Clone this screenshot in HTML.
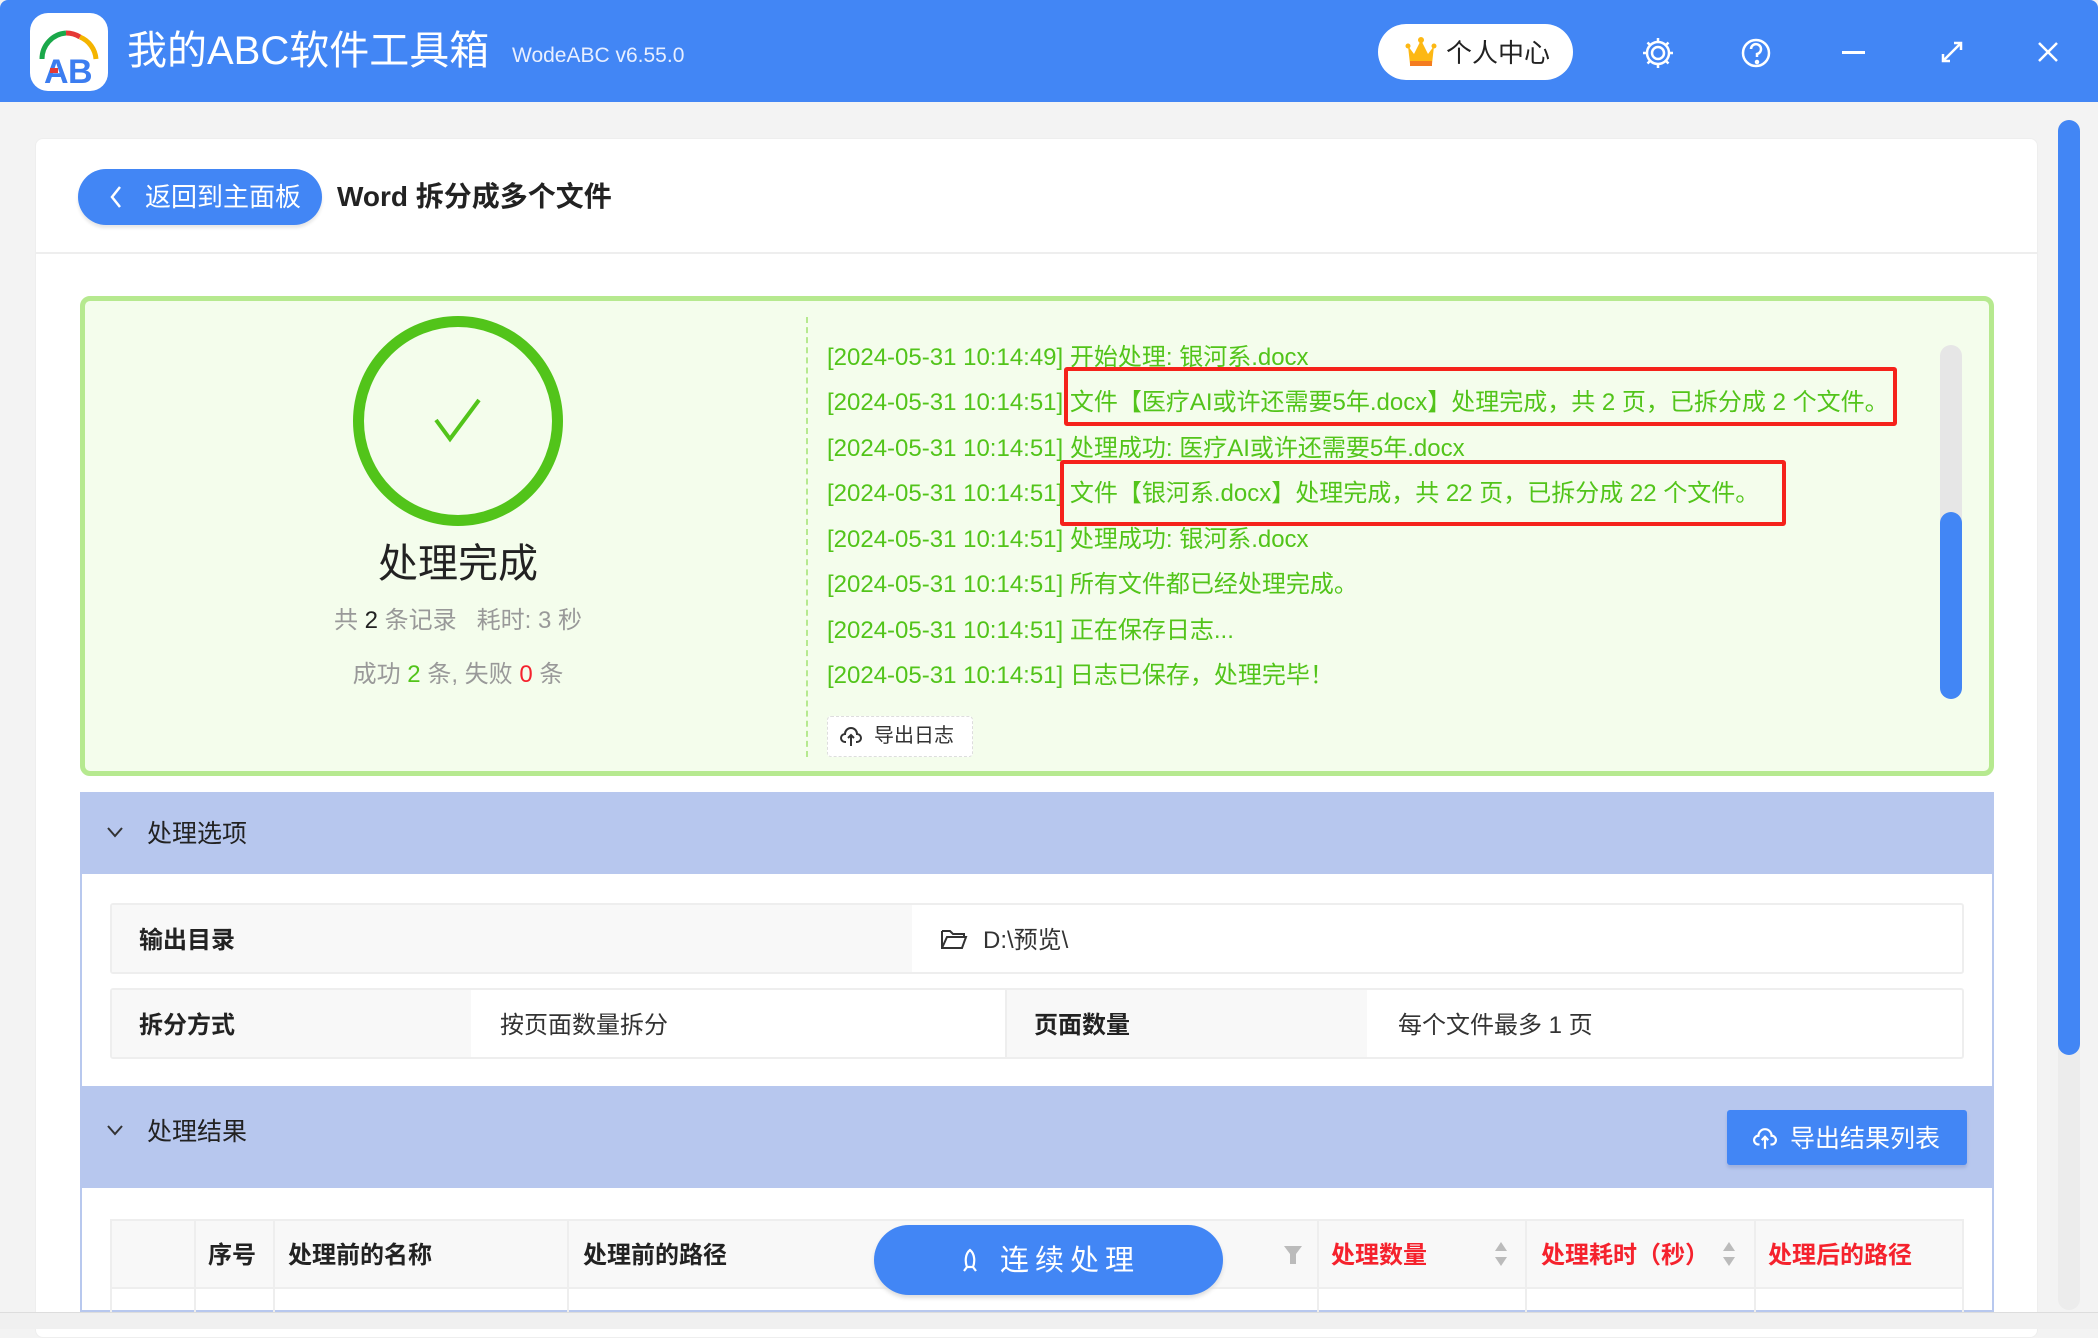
<!DOCTYPE html>
<html><head><meta charset="utf-8"><style>
*{margin:0;padding:0;box-sizing:border-box}
body{width:2098px;height:1329px;overflow:hidden;background:#f3f3f3;font-family:"Liberation Sans","Noto Sans CJK SC",sans-serif;position:relative;color:#333}
.a{position:absolute}
.hdr{left:0;top:0;width:2098px;height:102px;background:#4286f5;border-radius:8px 8px 0 0}
.log{left:827px;font-size:24px;color:#52c41a;white-space:nowrap;line-height:30px}
.rb{border:4px solid #f5221b;border-radius:3px}
.cell{position:absolute;font-size:24px;line-height:30px}
</style></head><body>
<div class="a hdr"></div>
<div class="a" style="left:30px;top:13px;width:78px;height:78px;background:#fff;border-radius:18px"></div>
<svg class="a" style="left:30px;top:13px" width="78" height="78" viewBox="0 0 78 78">
<path d="M12 46 A26 26 0 0 1 36 20" stroke="#1aa84a" stroke-width="5" fill="none"/>
<path d="M36 20 A26 26 0 0 1 50 24" stroke="#e53935" stroke-width="5" fill="none"/>
<path d="M50 24 A26 26 0 0 1 66 46" stroke="#f4b400" stroke-width="5" fill="none"/>
<text x="14" y="70" font-family="Liberation Sans" font-weight="bold" font-size="34" fill="#3c7df0">A</text>
<text x="38" y="70" font-family="Liberation Sans" font-weight="bold" font-size="34" fill="#3c7df0">B</text>
<rect x="20" y="55" width="8" height="5" fill="#e53935"/>
</svg>
<div class="a" style="left:127px;top:25px;font-size:40px;color:#fff;line-height:52px">我的ABC软件工具箱</div>
<div class="a" style="left:512px;top:42px;font-size:21px;color:#e8efff;line-height:28px">WodeABC v6.55.0</div>
<div class="a" style="left:1378px;top:24px;width:195px;height:56px;background:#fff;border-radius:28px"></div>
<svg class="a" style="left:1405px;top:36px" width="32" height="34" viewBox="0 0 32 34"><path d="M3 10 L9 18 L16 4 L23 18 L29 10 L27 28 L5 28Z" fill="#fdb813"/><rect x="5" y="25" width="22" height="5" fill="#f47c20"/><circle cx="16" cy="4" r="3" fill="#fdb813"/><circle cx="3" cy="10" r="2.5" fill="#fdb813"/><circle cx="29" cy="10" r="2.5" fill="#fdb813"/></svg>
<div class="a" style="left:1446px;top:36px;font-size:26px;line-height:34px;color:#222">个人中心</div>
<svg class="a" style="left:1640px;top:35px" width="200" height="36" viewBox="0 0 200 36" fill="none" stroke="#fff" stroke-width="2.5">
<circle cx="18" cy="18" r="6"/><path d="M18 3v5M18 28v5M3 18h5M28 18h5M7.5 7.5l3.5 3.5M25 25l3.5 3.5M7.5 28.5l3.5-3.5M25 11l3.5-3.5"/><circle cx="18" cy="18" r="11"/>
<circle cx="116" cy="18" r="13"/><path d="M111 14a5 5 0 1 1 6 5v3"/><circle cx="117" cy="27" r="1" fill="#fff"/>
</svg>
<div class="a" style="left:1842px;top:51px;width:23px;height:3px;background:#fff"></div>
<svg class="a" style="left:1940px;top:40px" width="24" height="24" viewBox="0 0 24 24" stroke="#fff" stroke-width="2.5" fill="none"><path d="M3 21L21 3M14 3h7v7M3 14v7h7"/></svg>
<svg class="a" style="left:2036px;top:40px" width="24" height="24" viewBox="0 0 24 24" stroke="#fff" stroke-width="2.5"><path d="M3 3L21 21M21 3L3 21"/></svg>

<div class="a" style="left:35px;top:138px;width:2003px;height:1200px;background:#fff;border-radius:8px;border:1px solid #eee"></div>
<div class="a" style="left:35px;top:252px;width:2003px;height:2px;background:#eeeeee"></div>
<div class="a" style="left:2058px;top:120px;width:22px;height:1190px;background:#ececec;border-radius:11px"></div>
<div class="a" style="left:2058px;top:120px;width:22px;height:935px;background:#4286f5;border-radius:11px"></div>

<div class="a" style="left:78px;top:169px;width:244px;height:56px;background:#4286f5;border-radius:28px;box-shadow:0 3px 3px #e6e6e6"></div>
<svg class="a" style="left:108px;top:184px" width="16" height="26" viewBox="0 0 16 26" stroke="#fff" stroke-width="2.5" fill="none"><path d="M12 3L4 13L12 23"/></svg>
<div class="a" style="left:145px;top:180px;font-size:26px;line-height:34px;color:#fff">返回到主面板</div>
<div class="a" style="left:337px;top:179px;font-size:28px;line-height:36px;font-weight:bold;color:#222">Word 拆分成多个文件</div>

<div class="a" style="left:80px;top:296px;width:1914px;height:480px;background:#f4fdec;border:5px solid #b6e98f;border-radius:10px"></div>
<div class="a" style="left:353px;top:316px;width:210px;height:210px;border:11px solid #52c41a;border-radius:50%"></div>
<svg class="a" style="left:430px;top:395px" width="56" height="50" viewBox="0 0 56 50" stroke="#52c41a" stroke-width="4" fill="none"><path d="M6 25L20 44L49 5"/></svg>
<div class="a" style="left:258px;top:538px;width:400px;text-align:center;font-size:40px;line-height:52px;color:#222">处理完成</div>
<div class="a" style="left:258px;top:605px;width:400px;text-align:center;font-size:24px;line-height:32px;color:#999">共 <span style="color:#222">2</span> 条记录 &nbsp; 耗时: 3 秒</div>
<div class="a" style="left:258px;top:659px;width:400px;text-align:center;font-size:24px;line-height:32px;color:#999">成功 <span style="color:#52c41a">2</span> 条, 失败 <span style="color:#f5222d">0</span> 条</div>
<div class="a" style="left:806px;top:317px;height:440px;border-left:2px dashed #b6e98f"></div>

<div class="a log" style="top:343px">[2024-05-31 10:14:49] 开始处理: 银河系.docx</div>
<div class="a log" style="top:388px">[2024-05-31 10:14:51] 文件【医疗AI或许还需要5年.docx】处理完成，共 2 页，已拆分成 2 个文件。</div>
<div class="a log" style="top:434px">[2024-05-31 10:14:51] 处理成功: 医疗AI或许还需要5年.docx</div>
<div class="a log" style="top:479px">[2024-05-31 10:14:51] 文件【银河系.docx】处理完成，共 22 页，已拆分成 22 个文件。</div>
<div class="a log" style="top:525px">[2024-05-31 10:14:51] 处理成功: 银河系.docx</div>
<div class="a log" style="top:570px">[2024-05-31 10:14:51] 所有文件都已经处理完成。</div>
<div class="a log" style="top:616px">[2024-05-31 10:14:51] 正在保存日志...</div>
<div class="a log" style="top:661px">[2024-05-31 10:14:51] 日志已保存，处理完毕！</div>
<div class="a rb" style="left:1064px;top:367px;width:833px;height:59px"></div>
<div class="a rb" style="left:1060px;top:460px;width:726px;height:66px"></div>
<div class="a" style="left:1940px;top:345px;width:22px;height:354px;background:#e6e6e6;border-radius:11px"></div>
<div class="a" style="left:1940px;top:512px;width:22px;height:187px;background:#4286f5;border-radius:11px"></div>

<div class="a" style="left:827px;top:716px;width:146px;height:41px;border:1px dashed #ddd;border-radius:4px;background:#fff"></div>
<svg class="a" style="left:840px;top:726px" width="22" height="22" viewBox="0 0 22 22" stroke="#333" stroke-width="2" fill="none"><path d="M6 16H5a4 4 0 0 1 0-8 6 6 0 0 1 12 0 4 4 0 0 1 0 8h-1M11 9v11M8 12l3-3 3 3"/></svg>
<div class="a" style="left:874px;top:722px;font-size:20px;line-height:28px;color:#333">导出日志</div>

<div class="a" style="left:80px;top:792px;width:1914px;height:520px;background:#fff;border:2px solid #b8c8ee"></div>
<div class="a" style="left:80px;top:792px;width:1914px;height:82px;background:#b7c7ee"></div>
<svg class="a" style="left:106px;top:825px" width="18" height="14" viewBox="0 0 18 14" stroke="#333" stroke-width="2" fill="none"><path d="M2 3L9 11L16 3"/></svg>
<div class="a" style="left:147px;top:818px;font-size:25px;line-height:32px;color:#222">处理选项</div>

<div class="a" style="left:110px;top:903px;width:1854px;height:71px;border:2px solid #eee;border-radius:3px"></div>
<div class="a" style="left:112px;top:905px;width:800px;height:67px;background:#f8f8f8"></div>
<div class="cell" style="left:139px;top:926px;font-weight:bold;color:#222">输出目录</div>
<svg class="a" style="left:940px;top:927px" width="28" height="24" viewBox="0 0 28 24" stroke="#333" stroke-width="2" fill="none"><path d="M2 4h8l3 3h11v3M2 4v17h20l4-11H7L2 21"/></svg>
<div class="cell" style="left:983px;top:926px;color:#333">D:\预览\</div>

<div class="a" style="left:110px;top:988px;width:1854px;height:71px;border:2px solid #eee;border-radius:3px"></div>
<div class="a" style="left:112px;top:990px;width:359px;height:67px;background:#f8f8f8"></div>
<div class="a" style="left:1005px;top:990px;width:362px;height:67px;background:#f8f8f8;border-left:2px solid #eee"></div>
<div class="cell" style="left:139px;top:1011px;font-weight:bold;color:#222">拆分方式</div>
<div class="cell" style="left:500px;top:1011px;color:#333">按页面数量拆分</div>
<div class="cell" style="left:1034px;top:1011px;font-weight:bold;color:#222">页面数量</div>
<div class="cell" style="left:1398px;top:1011px;color:#333">每个文件最多 1 页</div>

<div class="a" style="left:80px;top:1086px;width:1914px;height:102px;background:#b7c7ee"></div>
<svg class="a" style="left:106px;top:1123px" width="18" height="14" viewBox="0 0 18 14" stroke="#333" stroke-width="2" fill="none"><path d="M2 3L9 11L16 3"/></svg>
<div class="a" style="left:147px;top:1116px;font-size:25px;line-height:32px;color:#222">处理结果</div>
<div class="a" style="left:1727px;top:1110px;width:240px;height:55px;background:#4286f5;border-radius:3px;box-shadow:0 3px 3px #9fb0dc"></div>
<svg class="a" style="left:1753px;top:1127px" width="24" height="24" viewBox="0 0 22 22" stroke="#fff" stroke-width="2" fill="none"><path d="M6 16H5a4 4 0 0 1 0-8 6 6 0 0 1 12 0 4 4 0 0 1 0 8h-1M11 9v11M8 12l3-3 3 3"/></svg>
<div class="a" style="left:1790px;top:1123px;font-size:25px;line-height:32px;color:#fff">导出结果列表</div>

<div class="a" style="left:110px;top:1219px;width:1854px;height:100px;border:2px solid #eee"></div>
<div class="a" style="left:112px;top:1221px;width:1850px;height:68px;background:#f8f8f8;border-bottom:2px solid #eee"></div>
<div class="a" style="left:194px;top:1221px;height:100px;border-left:2px solid #eee"></div>
<div class="a" style="left:273px;top:1221px;height:100px;border-left:2px solid #eee"></div>
<div class="a" style="left:567px;top:1221px;height:100px;border-left:2px solid #eee"></div>
<div class="a" style="left:1317px;top:1221px;height:100px;border-left:2px solid #eee"></div>
<div class="a" style="left:1525px;top:1221px;height:100px;border-left:2px solid #eee"></div>
<div class="a" style="left:1754px;top:1221px;height:100px;border-left:2px solid #eee"></div>
<div class="cell" style="left:208px;top:1241px;font-weight:bold;color:#222">序号</div>
<div class="cell" style="left:288px;top:1241px;font-weight:bold;color:#222">处理前的名称</div>
<div class="cell" style="left:583px;top:1241px;font-weight:bold;color:#222">处理前的路径</div>
<svg class="a" style="left:1283px;top:1244px" width="20" height="24" viewBox="0 0 20 24" fill="#bbb"><path d="M1 2h18l-6 8v10h-6V10Z"/></svg>
<div class="cell" style="left:1331px;top:1241px;font-weight:bold;color:#f5222d">处理数量</div>
<div class="cell" style="left:1541px;top:1241px;font-weight:bold;color:#f5222d">处理耗时（秒）</div>
<div class="cell" style="left:1768px;top:1241px;font-weight:bold;color:#f5222d">处理后的路径</div>
<svg class="a" style="left:1493px;top:1240px" width="16" height="28" viewBox="0 0 16 28" fill="#bbb"><path d="M8 2L14 11H2ZM8 26L14 17H2Z"/></svg>
<svg class="a" style="left:1721px;top:1240px" width="16" height="28" viewBox="0 0 16 28" fill="#bbb"><path d="M8 2L14 11H2ZM8 26L14 17H2Z"/></svg>

<div class="a" style="left:874px;top:1225px;width:349px;height:70px;background:#4286f5;border-radius:35px;box-shadow:0 3px 4px #ddd"></div>
<svg class="a" style="left:960px;top:1248px" width="20" height="26" viewBox="0 0 20 26" stroke="#fff" stroke-width="2.2" fill="none"><path d="M10 2c5 4 5 12 3 17H7C5 14 5 6 10 2ZM7 19l-3 4M13 19l3 4"/></svg>
<div class="a" style="left:1000px;top:1243px;font-size:29px;line-height:36px;color:#fff;letter-spacing:6px">连续处理</div>

<div class="a" style="left:0;top:1312px;width:2098px;height:17px;background:#f0f0f0;border-top:1px solid #ddd"></div>
</body></html>
